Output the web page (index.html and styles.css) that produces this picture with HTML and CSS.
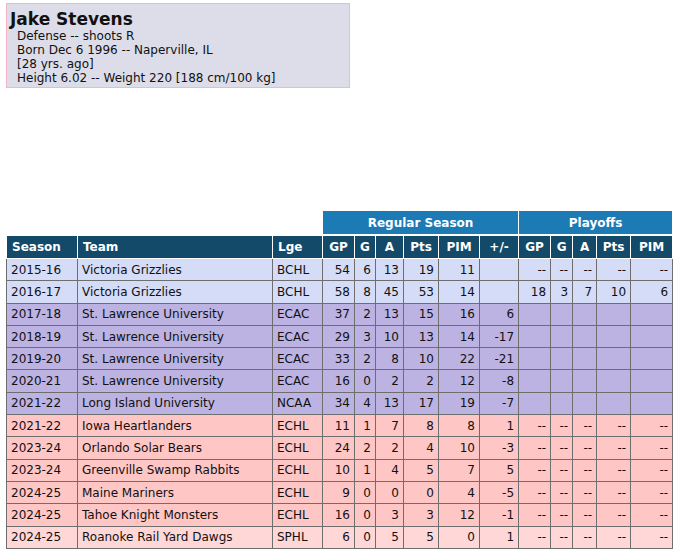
FILE: index.html
```html
<!DOCTYPE html>
<html>
<head>
<meta charset="utf-8">
<link rel="stylesheet" href="styles.css">
</head>
<body>
<div class="bio">
  <div class="name">Jake Stevens</div>
  <div class="info">
    <div>Defense -- shoots R</div>
    <div>Born Dec 6 1996 -- Naperville, IL</div>
    <div>[28 yrs. ago]</div>
    <div>Height 6.02 -- Weight 220 [188 cm/100 kg]</div>
  </div>
</div>

<table class="stats">
  <colgroup>
    <col class="c-season"><col class="c-team"><col class="c-lge">
    <col class="c-gp"><col class="c-g"><col class="c-a"><col class="c-pts"><col class="c-pim"><col class="c-pm">
    <col class="c-pgp"><col class="c-pg"><col class="c-pa"><col class="c-ppts"><col class="c-ppim">
  </colgroup>
  <thead>
    <tr class="group">
      <th colspan="3" class="blank"></th>
      <th colspan="6">Regular Season</th>
      <th colspan="5">Playoffs</th>
    </tr>
    <tr class="cols">
      <th class="l">Season</th><th class="l">Team</th><th class="l">Lge</th>
      <th>GP</th><th>G</th><th>A</th><th>Pts</th><th>PIM</th><th>+/-</th>
      <th>GP</th><th>G</th><th>A</th><th>Pts</th><th>PIM</th>
    </tr>
  </thead>
  <tbody>
    <tr class="jr"><td class="l">2015-16</td><td class="l">Victoria Grizzlies</td><td class="l">BCHL</td><td>54</td><td>6</td><td>13</td><td>19</td><td>11</td><td></td><td>--</td><td>--</td><td>--</td><td>--</td><td>--</td></tr>
    <tr class="jr"><td class="l">2016-17</td><td class="l">Victoria Grizzlies</td><td class="l">BCHL</td><td>58</td><td>8</td><td>45</td><td>53</td><td>14</td><td></td><td>18</td><td>3</td><td>7</td><td>10</td><td>6</td></tr>
    <tr class="col"><td class="l">2017-18</td><td class="l">St. Lawrence University</td><td class="l">ECAC</td><td>37</td><td>2</td><td>13</td><td>15</td><td>16</td><td>6</td><td></td><td></td><td></td><td></td><td></td></tr>
    <tr class="col"><td class="l">2018-19</td><td class="l">St. Lawrence University</td><td class="l">ECAC</td><td>29</td><td>3</td><td>10</td><td>13</td><td>14</td><td>-17</td><td></td><td></td><td></td><td></td><td></td></tr>
    <tr class="col"><td class="l">2019-20</td><td class="l">St. Lawrence University</td><td class="l">ECAC</td><td>33</td><td>2</td><td>8</td><td>10</td><td>22</td><td>-21</td><td></td><td></td><td></td><td></td><td></td></tr>
    <tr class="col"><td class="l">2020-21</td><td class="l">St. Lawrence University</td><td class="l">ECAC</td><td>16</td><td>0</td><td>2</td><td>2</td><td>12</td><td>-8</td><td></td><td></td><td></td><td></td><td></td></tr>
    <tr class="col"><td class="l">2021-22</td><td class="l">Long Island University</td><td class="l">NCAA</td><td>34</td><td>4</td><td>13</td><td>17</td><td>19</td><td>-7</td><td></td><td></td><td></td><td></td><td></td></tr>
    <tr class="pro"><td class="l">2021-22</td><td class="l">Iowa Heartlanders</td><td class="l">ECHL</td><td>11</td><td>1</td><td>7</td><td>8</td><td>8</td><td>1</td><td>--</td><td>--</td><td>--</td><td>--</td><td>--</td></tr>
    <tr class="pro"><td class="l">2023-24</td><td class="l">Orlando Solar Bears</td><td class="l">ECHL</td><td>24</td><td>2</td><td>2</td><td>4</td><td>10</td><td>-3</td><td>--</td><td>--</td><td>--</td><td>--</td><td>--</td></tr>
    <tr class="pro"><td class="l">2023-24</td><td class="l">Greenville Swamp Rabbits</td><td class="l">ECHL</td><td>10</td><td>1</td><td>4</td><td>5</td><td>7</td><td>5</td><td>--</td><td>--</td><td>--</td><td>--</td><td>--</td></tr>
    <tr class="pro"><td class="l">2024-25</td><td class="l">Maine Mariners</td><td class="l">ECHL</td><td>9</td><td>0</td><td>0</td><td>0</td><td>4</td><td>-5</td><td>--</td><td>--</td><td>--</td><td>--</td><td>--</td></tr>
    <tr class="pro"><td class="l">2024-25</td><td class="l">Tahoe Knight Monsters</td><td class="l">ECHL</td><td>16</td><td>0</td><td>3</td><td>3</td><td>12</td><td>-1</td><td>--</td><td>--</td><td>--</td><td>--</td><td>--</td></tr>
    <tr class="minor"><td class="l">2024-25</td><td class="l">Roanoke Rail Yard Dawgs</td><td class="l">SPHL</td><td>6</td><td>0</td><td>5</td><td>5</td><td>0</td><td>1</td><td>--</td><td>--</td><td>--</td><td>--</td><td>--</td></tr>
  </tbody>
</table>
</body>
</html>
```
FILE: styles.css
```css
html, body {
  margin: 0;
  padding: 0;
  background: #ffffff;
}
body {
  padding: 3px 6px;
  font-family: "DejaVu Sans", Verdana, sans-serif;
  font-size: 12px;
  color: #111;
}
.bio {
  width: 342px;
  height: 83px;
  box-sizing: content-box;
  background: #dddde9;
  border: 1px solid #f4b5c4;
  padding: 0;
}
.name {
  font-size: 17px;
  font-weight: bold;
  margin: 5px 0 0 3px;
  line-height: 20px;
}
.info {
  margin-left: 10px;
  line-height: 14px;
}
.stats {
  margin-top: 122px;
  border-collapse: collapse;
  table-layout: fixed;
  width: 666px;
}
.c-season { width: 71px; }
.c-team { width: 195px; }
.c-lge { width: 50px; }
.c-gp { width: 32px; }
.c-g { width: 21px; }
.c-a { width: 28px; }
.c-pts { width: 35px; }
.c-pim { width: 41px; }
.c-pm { width: 39px; }
.c-pgp { width: 32px; }
.c-pg { width: 22px; }
.c-pa { width: 24px; }
.c-ppts { width: 34px; }
.c-ppim { width: 42px; }
.stats th {
  color: #ffffff;
  font-weight: bold;
  text-align: center;
  border: 1px solid #ffffff;
  padding: 0 4px;
  height: 22px;
  white-space: nowrap;
}
.stats tr.group th {
  background: #1c7ab5;
  height: 23px;
  border-bottom-width: 2px;
}
.stats tr.group th.blank {
  background: #ffffff;
}
.stats tr.cols th {
  background: #134a69;
}
.stats th.l {
  text-align: left;
  padding-left: 5px;
}
.stats td {
  border: 1px solid #6e6e6e;
  text-align: right;
  padding: 0 4px 0 3px;
  height: 21.3px;
  white-space: nowrap;
  overflow: hidden;
}
.stats td.l {
  text-align: left;
  padding-left: 4px;
}
.jr td { background: #d4dcf8; }
.col td { background: #bcb3e2; }
.pro td { background: #ffc6c6; }
.minor td { background: #ffd7d7; }
```
